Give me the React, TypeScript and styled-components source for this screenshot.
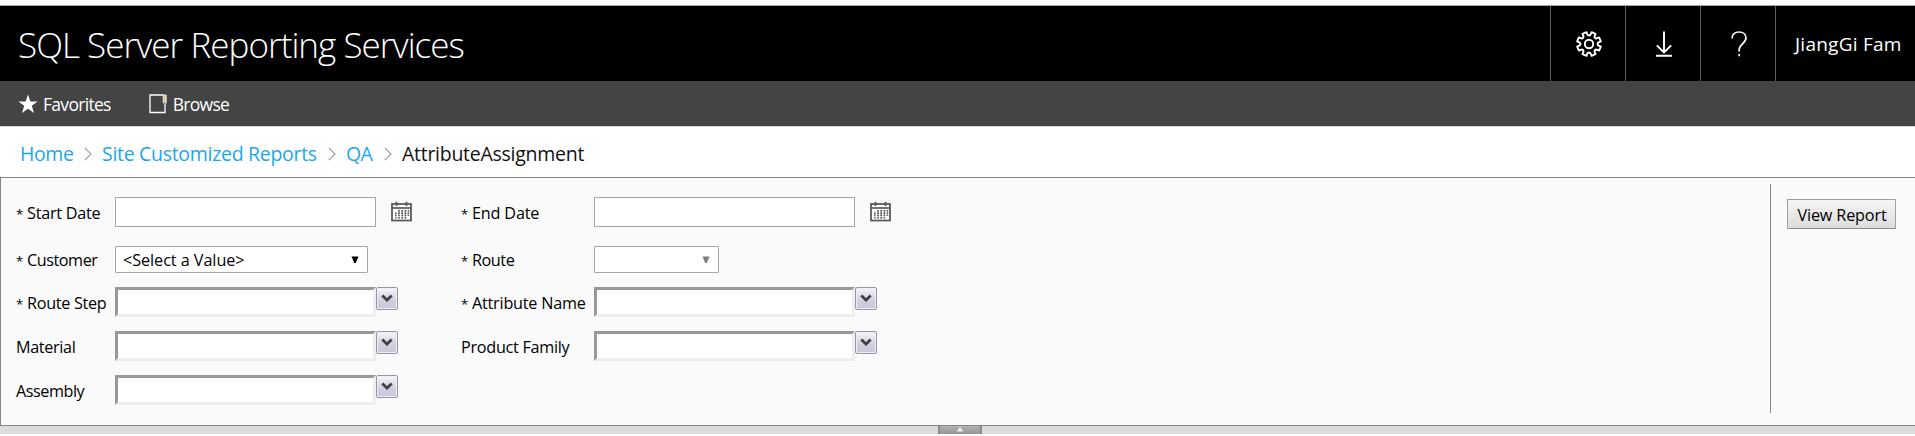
import React from "react";
import styled, { createGlobalStyle, css } from "styled-components";

const GlobalStyle = createGlobalStyle`
  * { box-sizing: border-box; }
  body { margin: 0; background: #fff; font-family: "Open Sans", "Noto Sans", sans-serif; color: #000; }
`;

const Page = styled.div`
  width: 100%;
  height: 436px;
  padding-top: 5px;
  overflow: hidden;
`;

const Header = styled.header`
  display: flex;
  height: 76px;
  border-top: 1px solid #a3aaa3;
  background: #000;
  color: #fff;
`;

const Title = styled.h1`
  flex: 1;
  margin: 0;
  padding: 1px 0 0 18px;
  font-size: 35px;
  font-weight: 300;
  line-height: 75px;
  letter-spacing: -0.95px;
  white-space: nowrap;
`;

const HeaderCell = styled.div`
  display: flex;
  align-items: center;
  justify-content: center;
  width: 75px;
  padding-left: 1px;
  border-left: 1px solid #5c5c5c;
`;

const UserName = styled.div`
  width: 140px;
  padding: 2px 0 0 19px;
  border-left: 1px solid #5c5c5c;
  font-size: 19px;
  line-height: 73px;
  letter-spacing: 0.25px;
  white-space: nowrap;
`;

const NavBar = styled.nav`
  display: flex;
  align-items: center;
  gap: 38px;
  height: 46px;
  padding-left: 18px;
  border-bottom: 1px solid #d8d8d8;
  background: #444;
  color: #fff;
`;

const NavItem = styled.span<{ $gap: number }>`
  display: flex;
  align-items: center;
  gap: ${(p) => p.$gap}px;
  padding-top: 1px;
  font-size: 17.5px;
  line-height: 45px;
  letter-spacing: -0.7px;
`;

const Breadcrumb = styled.div`
  display: flex;
  align-items: center;
  height: 50px;
  padding: 3px 0 0 20px;
  font-size: 19.5px;
  white-space: nowrap;
`;

const Crumb = styled.span<{ $current?: boolean; $width: number; $track: number }>`
  width: ${(p) => p.$width}px;
  color: ${(p) => (p.$current ? "#111" : "#1aa7ee")};
  letter-spacing: ${(p) => p.$track}px;
`;

const Chevron = styled.svg`
  width: 8px;
  height: 14px;
  margin: 0 10px 0 11px;
`;

const Panel = styled.section`
  display: flex;
  height: 249px;
  border: solid #868686;
  border-width: 1px 0 1px 1px;
  background: #fafafa;
`;

const Fields = styled.div`
  display: grid;
  flex: 1;
  grid-template-columns: 99px 346px 133px 1fr;
  grid-template-rows: 49px 41px 44px 44px 30px;
  padding: 19px 0 0 15px;
`;

const Label = styled.label<{ $short?: boolean; $track: number }>`
  font-size: 16.2px;
  line-height: ${(p) => (p.$short ? 29 : 33)}px;
  letter-spacing: ${(p) => p.$track}px;
  white-space: nowrap;
`;

const RequiredMark = styled.span`
  display: inline-block;
  width: 11px;
  font-size: 13px;
  line-height: 1;
`;

const Control = styled.div`
  display: flex;
  align-items: flex-start;
`;

const inputBase = css`
  width: 261px;
  height: 30px;
  background: #fff;
`;

const DateInput = styled.div`
  ${inputBase}
  border: 1px solid #a6a6a6;
`;

const MultiInput = styled.div`
  ${inputBase}
  border: 3px solid;
  border-color: #999 #eee #eee #999;
`;

const CalendarIcon = styled.svg`
  width: 21px;
  height: 21px;
  margin: 4px 0 0 15px;
`;

const SelectBox = styled.div<{ $width: number; $disabled?: boolean }>`
  display: flex;
  align-items: center;
  justify-content: space-between;
  width: ${(p) => p.$width}px;
  height: 27px;
  padding: 0 8px 0 7px;
  border: 1px solid #a6a6a6;
  border-radius: 1px;
  background: #fff;
  color: ${(p) => (p.$disabled ? "#7d7d7d" : "#000")};
`;

const SelectText = styled.span`
  padding-top: 2px;
  font-size: 16.2px;
  line-height: 25px;
  letter-spacing: -0.05px;
`;

const DropButton = styled.div`
  display: flex;
  align-items: center;
  justify-content: center;
  width: 22px;
  height: 23px;
  border: 1px solid #9595a8;
  border-radius: 2px;
  background: linear-gradient(#f6f6fa, #cfcfde 60%, #c8c8d8);
  box-shadow: inset 0 0 0 1px #eeeef5;
`;

const Actions = styled.div`
  width: 145px;
  height: 229px;
  margin-top: 6px;
  padding: 15px 0 0 16px;
  border-left: 1px solid #868686;
`;

const ViewButton = styled.button`
  width: 109px;
  height: 30px;
  padding: 2px 0 0 1px;
  border: 1px solid #a0a0a0;
  border-bottom-color: #8c8c8c;
  border-radius: 1px;
  background: linear-gradient(#f5f5f5, #dcdcdc);
  color: #000;
  font: 16.2px/26px "Open Sans", "Noto Sans", sans-serif;
  letter-spacing: -0.15px;
  white-space: nowrap;
`;

const Splitter = styled.div`
  display: flex;
  height: 8px;
  padding-left: 938px;
  background: #dcdcdc;
`;

const SplitHandle = styled.div`
  display: flex;
  justify-content: center;
  width: 44px;
  height: 8px;
  border: solid #8b8b8b;
  border-width: 0 2px;
  background: linear-gradient(#b2b2b2, #949494);
`;

const gearPath =
  Array.from({ length: 8 }, (_, i) => {
    const at = (deg: number, r: number) => {
      const a = ((i * 45 + deg) * Math.PI) / 180;
      return `${(13 + r * Math.cos(a)).toFixed(2)} ${(13 + r * Math.sin(a)).toFixed(2)}`;
    };
    return `${i ? "L" : "M"}${at(-10, 12.1)}L${at(10, 12.1)}L${at(13.5, 9.4)}Q${at(22.5, 7.8)} ${at(31.5, 9.4)}`;
  }).join("") + "Z";

const Gear = () => (
  <svg width="26" height="26" viewBox="0 0 26 26" fill="none" stroke="#fff" strokeWidth="1.9" strokeLinejoin="round">
    <path d={gearPath} transform="rotate(22.5 13 13)" />
    <circle cx="13" cy="13" r="4.2" />
  </svg>
);

const Download = () => (
  <svg width="16" height="26" viewBox="0 0 16 26" fill="none" stroke="#fff" strokeWidth="1.9">
    <path d="M8 .5V21M.8 14.3L8 21.5L15.2 14.3M0 24.7H16" />
  </svg>
);

const Help = () => (
  <svg width="16" height="26" viewBox="0 0 16 26" fill="none" stroke="#fff" strokeWidth="1.7">
    <path d="M1 7.5C1 3.3 4 1 8 1s7 2.2 7 6c0 5-6.8 6.5-6.8 11.2V20.5M8.2 23v2.2" />
  </svg>
);

const Star = () => (
  <svg width="20" height="20" viewBox="0 0 20 20" fill="#fff">
    <path d="M10 .5L12.4 7.5H19.6L13.8 11.8L16 19L10 14.7L4 19L6.2 11.8L.4 7.5H7.6Z" />
  </svg>
);

const Book = () => (
  <svg width="18" height="20" viewBox="0 0 18 20" fill="none" stroke="#fff" strokeWidth="1.3">
    <path d="M14 1H1V18.5H16V9" />
    <path d="M14.2 .5V9L15.7 7.6L17.2 9V1H14" fill="#d8c48c" strokeWidth=".8" />
  </svg>
);

const Separator = () => (
  <Chevron viewBox="0 0 8 14" fill="none" stroke="#999" strokeWidth="1.1">
    <path d="M.8 .8L7 7L.8 13.2" />
  </Chevron>
);

const Calendar = () => (
  <CalendarIcon viewBox="0 0 21 21">
    <rect x="1" y="3" width="19" height="16.5" fill="#fff" stroke="#5a5a5a" strokeWidth="1.8" />
    <path d="M1 7H20" stroke="#5a5a5a" strokeWidth="1.7" />
    <path d="M5.5 .8V5M15.5 .8V5" stroke="#5a5a5a" strokeWidth="1.8" />
    <path d="M8 9v8.5M11.2 9v8.5M14.4 9v8.5" stroke="#555" strokeWidth="1.7" strokeDasharray="1.7 .6" />
    <path d="M4.8 11.3v6.2M17.4 9v6" stroke="#666" strokeWidth="1.6" strokeDasharray="1.7 .6" />
  </CalendarIcon>
);

const Arrow = () => (
  <svg width="8" height="8" viewBox="0 0 8 8">
    <path d="M.5 .5H7.5L4.8 7H3.2Z" fill="currentColor" />
  </svg>
);

const MultiValue = () => (
  <Control>
    <MultiInput />
    <DropButton>
      <svg width="12" height="9" viewBox="0 0 12 9">
        <path d="M1.3 1.6L6 6L10.7 1.6" fill="none" stroke="#404044" strokeWidth="2.8" />
      </svg>
    </DropButton>
  </Control>
);

const DateValue = () => (
  <Control>
    <DateInput />
    <Calendar />
  </Control>
);

const Required = () => <RequiredMark>*</RequiredMark>;

export default function App() {
  return (
    <Page>
      <GlobalStyle />
      <Header>
        <Title>SQL Server Reporting Services</Title>
        <HeaderCell><Gear /></HeaderCell>
        <HeaderCell><Download /></HeaderCell>
        <HeaderCell><Help /></HeaderCell>
        <UserName>JiangGi Fam</UserName>
      </Header>
      <NavBar>
        <NavItem $gap={5}><Star />Favorites</NavItem>
        <NavItem $gap={6}><Book />Browse</NavItem>
      </NavBar>
      <Breadcrumb>
        <Crumb $width={53} $track={-0.4}>Home</Crumb>
        <Separator />
        <Crumb $width={215} $track={-0.3}>Site Customized Reports</Crumb>
        <Separator />
        <Crumb $width={27} $track={-0.6}>QA</Crumb>
        <Separator />
        <Crumb $current $width={190} $track={-0.27}>AttributeAssignment</Crumb>
      </Breadcrumb>
      <Panel>
        <Fields>
          <Label $track={-0.25}><Required />Start Date</Label>
          <DateValue />
          <Label $track={-0.18}><Required />End Date</Label>
          <DateValue />
          <Label $short $track={-0.45}><Required />Customer</Label>
          <Control><SelectBox $width={253}><SelectText>&lt;Select a Value&gt;</SelectText><Arrow /></SelectBox></Control>
          <Label $short $track={-0.45}><Required />Route</Label>
          <Control><SelectBox $width={125} $disabled><span /><Arrow /></SelectBox></Control>
          <Label $track={-0.3}><Required />Route Step</Label>
          <MultiValue />
          <Label $track={-0.22}><Required />Attribute Name</Label>
          <MultiValue />
          <Label $track={-0.35}>Material</Label>
          <MultiValue />
          <Label $track={-0.28}>Product Family</Label>
          <MultiValue />
          <Label $track={-0.45}>Assembly</Label>
          <MultiValue />
        </Fields>
        <Actions><ViewButton>View Report</ViewButton></Actions>
      </Panel>
      <Splitter>
        <SplitHandle>
          <svg width="8" height="8" viewBox="0 0 8 8"><path d="M4 1L7.5 5.5H.5Z" fill="#eee" /></svg>
        </SplitHandle>
      </Splitter>
    </Page>
  );
}
